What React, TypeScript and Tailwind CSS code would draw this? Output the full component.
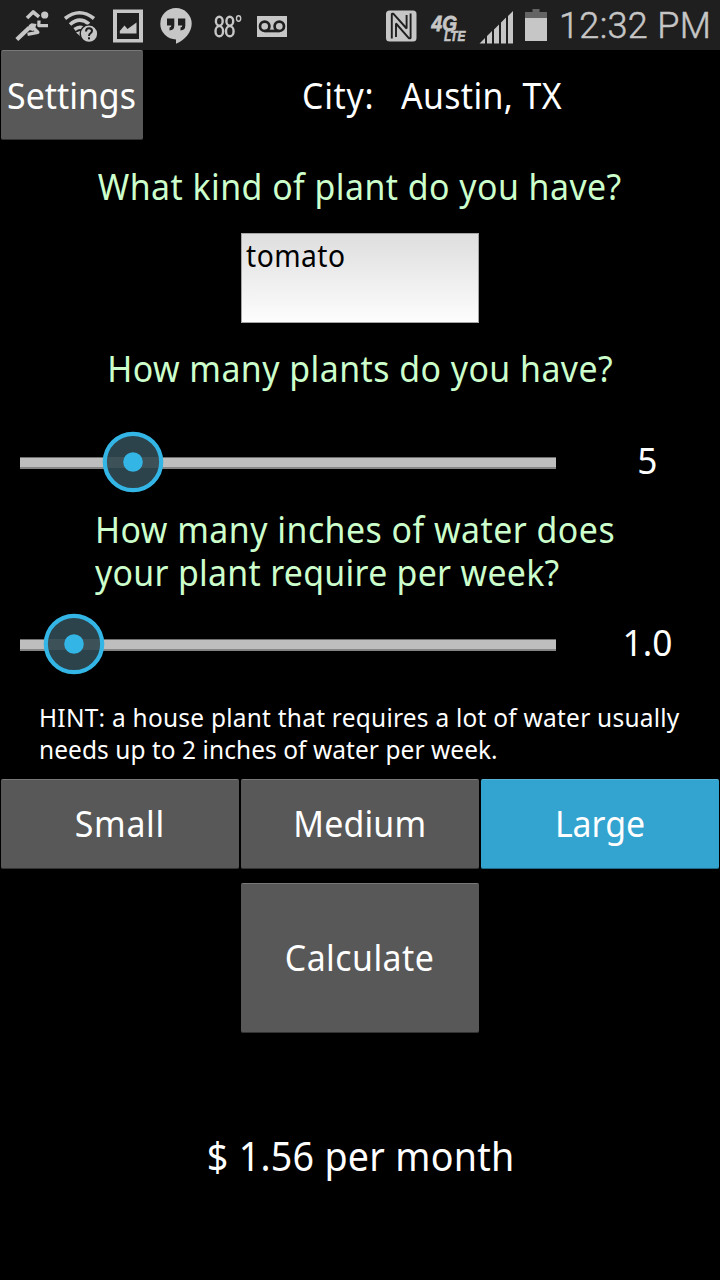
import React from "react";

const buttonBase =
  "flex items-center justify-center rounded-[2px] border-t border-b pb-[2px] text-[36px] leading-[43px] text-white";
const greyButton = "border-t-[#787878] border-b-[#333333] bg-[#585858]";
const blueButton = "border-t-[#55b3d8] border-b-[#1f6a8a] bg-[#33a3d0]";

function StatusBar() {
  return (
    <header className="h-[50px] w-[720px] bg-[#1f1f1f]">
      <svg width="720" height="50" viewBox="0 0 720 50" fill="#c6c6c6">
        <g fill="none" stroke="#c6c6c6" strokeLinejoin="round">
          <path d="M27 18 L33.2 12 L39 16.8" strokeWidth="3.6" />
          <path d="M39 20.5 L38.8 25.6 H48" strokeWidth="3.2" />
          <path d="M29.5 27.5 L16.8 39.6" strokeWidth="4.2" />
          <path d="M33.5 28 L37.8 32.3 L27.5 34.3" strokeWidth="3.4" />
        </g>
        <path d="M31.5 23.2 L36.5 24 L35 28.5 L33 31 L27.5 29.5 L29 25z" />
        <circle cx="44.7" cy="15" r="3.6" />

        <g fill="none" stroke="#c6c6c6" strokeWidth="3.6">
          <path d="M65 18.5 Q79.5 7 94 18.5" />
          <path d="M70 24.5 Q79.5 16 89 24" />
          <path d="M74.5 29.5 Q79 26 83 28" />
        </g>
        <path d="M76 32.5 L80 31 V36z" />
        <circle cx="89" cy="33.7" r="8.8" stroke="#1f1f1f" strokeWidth="1.4" />
        <path d="M86 31.5 Q86 28.2 89 28.2 Q92 28.2 92 30.8 Q92 32.2 90.5 33.3 Q89 34.4 89 36" fill="none" stroke="#1f1f1f" strokeWidth="2" />
        <rect x="88" y="37.3" width="2" height="2" fill="#1f1f1f" />

        <path fillRule="evenodd" d="M113 9.5H143V42.5H113z M117 13V39H139V13z" />
        <path d="M119.8 33.5V31L124.5 25.5L127.5 29L136.5 22.5V33.5z" />

        <path d="M176 8A15.7 15.7 0 0 1 191.7 23.8C191.7 32 185 40 176 43.8V39.4A15.7 15.7 0 0 1 176 8z" />
        <path d="M167 18.5H174.3V25.5Q174.3 30.3 169.5 30.5V27.5Q171.3 27.3 171.3 25.5H167z M178 18.5H185.3V25.5Q185.3 30.3 180.5 30.5V27.5Q182.3 27.3 182.3 25.5H178z" fill="#1f1f1f" />

        <g fill="none" stroke="#c6c6c6" strokeWidth="2.4">
          <ellipse cx="219.3" cy="21.2" rx="3.4" ry="4.4" />
          <ellipse cx="219.3" cy="31.2" rx="3.8" ry="5.1" />
          <ellipse cx="229.8" cy="21.2" rx="3.4" ry="4.4" />
          <ellipse cx="229.8" cy="31.2" rx="3.8" ry="5.1" />
          <ellipse cx="238.6" cy="18.5" rx="2.1" ry="2.7" strokeWidth="1.4" />
        </g>

        <rect x="257" y="16" width="30" height="21" />
        <g fill="none" stroke="#1f1f1f" strokeWidth="2.7">
          <circle cx="264.7" cy="26.3" r="4.7" />
          <circle cx="279.3" cy="26.3" r="4.7" />
          <path d="M264.7 31H279.3" />
        </g>

        <rect x="386" y="10.5" width="30.5" height="31" rx="3.5" />
        <g fill="none" stroke="#1f1f1f" strokeWidth="1.9" strokeLinejoin="bevel">
          <path d="M391.8 38.5V13.8H393.5L406.6 28.5V15" />
          <path d="M410.6 13.5V38.3H409L396 23.5V37" />
        </g>

        <text x="431.5" y="30.5" fontFamily="Liberation Sans" fontWeight="bold" fontStyle="italic" fontSize="22" textLength="25.5" lengthAdjust="spacingAndGlyphs" stroke="#c6c6c6" strokeWidth=".8">4G</text>
        <text x="444" y="41" fontFamily="Liberation Sans" fontWeight="bold" fontStyle="italic" fontSize="14" textLength="21.5" lengthAdjust="spacingAndGlyphs" stroke="#c6c6c6" strokeWidth=".5">LTE</text>

        <path d="M479.5 43.5L485 38V43.5z M487 36L492 31V43.5H487z M494 29.5L499 24.5V43.5H494z M501 22.5L506 17.5V43.5H501z M508 16L513 11V43.5H508z" />
        <path d="M532.5 9H539.5V12H547V18H525V12H532.5z" fill="#646464" />
        <rect x="525" y="18" width="22" height="23" />
        <text x="559" y="38" fontFamily="Roboto" fontWeight="300" fontSize="36" textLength="152" lengthAdjust="spacing" stroke="#c6c6c6" strokeWidth=".5">12:32 PM</text>
      </svg>
    </header>
  );
}

function Slider({ position, value }: { position: number; value: string }) {
  return (
    <div className="flex h-[62px] items-center">
      <div className="relative ml-5 mt-[2px] h-[12px] w-[536px] border-t border-b-2 border-t-[#707070] border-b-[#858585] bg-[#bebebe]">
        <svg
          className="absolute -top-[27px] h-[62px] w-[62px]"
          style={{ left: position - 31 }}
          viewBox="0 0 62 62"
        >
          <circle cx="31" cy="31" r="29.5" fill="#2c434b" />
          <rect x="4" y="26" width="54" height="11" fill="#3c5158" />
          <circle cx="31" cy="31" r="28.2" fill="none" stroke="#33b5e5" strokeWidth="4.2" />
          <circle cx="31" cy="31" r="9.8" fill="#33b5e5" />
        </svg>
      </div>
      <div className="-mt-[4px] ml-[19px] w-[144px] text-center text-[36px] leading-[43px]">
        <span className="inline-block scale-x-[0.98]">{value}</span>
      </div>
    </div>
  );
}

export default function App() {
  return (
    <div className="flex h-[1280px] w-[720px] flex-col overflow-hidden bg-black font-['Noto_Sans',sans-serif] text-white">
      <StatusBar />
      <div className="flex h-[90px] pl-px">
        <button className={`${buttonBase} ${greyButton} h-[90px] w-[142px]`}>
          <span className="-ml-[2px] mt-[2px] scale-x-[0.94] whitespace-nowrap">Settings</span>
        </button>
        <div className="flex flex-1 items-center pt-[2px] pl-[159px] text-[36px]">
          <span className="w-[99px] origin-left scale-x-[0.94] tracking-[0.8px]">City:</span>
          <span className="origin-left scale-x-[0.94] whitespace-nowrap tracking-[0.4px]">Austin, TX</span>
        </div>
      </div>
      <h2 className="flex h-[93px] items-center justify-center text-[36px] text-[#ccffcc]">
        <span className="scale-x-[0.94] whitespace-nowrap tracking-[0.5px]">What kind of plant do you have?</span>
      </h2>
      <div className="mx-auto h-[90px] w-[238px] border border-[#a5a5a5] bg-linear-to-b from-[#dedede] to-[#fdfdfd] pl-[4px] pt-[4px] text-[30px] leading-[36px] text-black">
        <span className="inline-block origin-left scale-x-[0.94] tracking-[0.5px]">tomato</span>
      </div>
      <h2 className="flex h-[92px] items-center justify-center text-[36px] text-[#ccffcc]">
        <span className="scale-x-[0.94] whitespace-nowrap tracking-[0.5px]">How many plants do you have?</span>
      </h2>
      <div className="mt-[16px]">
        <Slider position={112.5} value="5" />
      </div>
      <h2 className="mt-[15px] h-[86px] pl-[95px] text-[36px] leading-[43px] text-[#ccffcc]">
        <span className="block origin-left scale-x-[0.94] whitespace-nowrap tracking-[0.52px]">How many inches of water does</span>
        <span className="block origin-left scale-x-[0.94] whitespace-nowrap tracking-[0.32px]">your plant require per week?</span>
      </h2>
      <div className="mt-[19px]">
        <Slider position={53.5} value="1.0" />
      </div>
      <p className="mt-[26px] h-[78px] pl-[39px] text-[26px] leading-[32px]">
        <span className="block origin-left scale-x-[0.94] whitespace-nowrap tracking-[0.27px]">HINT: a house plant that requires a lot of water usually</span>
        <span className="block origin-left scale-x-[0.94] whitespace-nowrap tracking-[0.08px]">needs up to 2 inches of water per week.</span>
      </p>
      <div className="grid h-[90px] grid-cols-3 gap-[2px] px-px">
        <button className={`${buttonBase} ${greyButton}`}>
          <span className="scale-x-[0.94] tracking-[0.7px]">Small</span>
        </button>
        <button className={`${buttonBase} ${greyButton}`}>
          <span className="scale-x-[0.94] tracking-[0.2px]">Medium</span>
        </button>
        <button className={`${buttonBase} ${blueButton}`}>
          <span className="scale-x-[0.94]">Large</span>
        </button>
      </div>
      <button className={`${buttonBase} ${greyButton} mx-auto mt-[14px] h-[150px] w-[238px]`}>
        <span className="scale-x-[0.94] tracking-[0.5px]">Calculate</span>
      </button>
      <div className="mt-[99px] flex h-[48px] items-center justify-center text-[40px]">
        <span className="ml-px scale-x-[0.94] whitespace-nowrap tracking-[0.3px]">$ 1.56 per month</span>
      </div>
    </div>
  );
}
